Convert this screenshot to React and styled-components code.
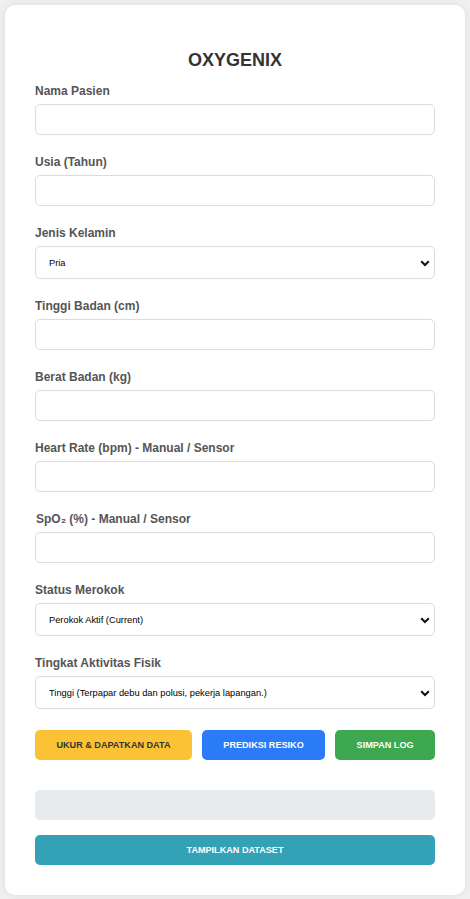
import React from "react";
import styled, { createGlobalStyle } from "styled-components";

const Global = createGlobalStyle`
  html, body { margin: 0; padding: 0; }
  body {
    background: #f0f0f0;
    font-family: "Liberation Sans", Arial, sans-serif;
    padding: 5px;
  }
  * { box-sizing: border-box; }
`;

const Card = styled.div`
  background: #fff;
  border-radius: 10px;
  box-shadow: 0 0 8px rgba(0, 0, 0, 0.08);
  padding: 30px 30px 30px;
  display: flex;
  flex-direction: column;
`;

const Title = styled.h2`
  margin: 15px 0 14px;
  font-size: 18px;
  line-height: 20px;
  font-weight: 700;
  color: #333;
  text-align: center;
`;

const Group = styled.div`
  display: flex;
  flex-direction: column;
  margin-bottom: 20px;
`;

const Label = styled.label`
  font-size: 12px;
  line-height: 15px;
  font-weight: 700;
  color: #555;
  margin-bottom: 5px;
  padding-left: ${(p) => (p.$indent ? "1px" : "0")};
`;

const Input = styled.input`
  height: 31px;
  border: 1px solid #dcdcdc;
  border-radius: 5px;
  padding: 0 13px;
  font-family: inherit;
  font-size: 9.3px;
  background: #fff;
  outline: none;
`;

const SelectWrap = styled.div`
  position: relative;
  display: flex;
`;

const Select = styled.select`
  flex: 1;
  height: 33px;
  appearance: none;
  -webkit-appearance: none;
  border: 1px solid #dcdcdc;
  border-radius: 5px;
  padding: 0 28px 0 13px;
  font-family: inherit;
  font-size: 9.3px;
  color: #000;
  background: #fff;
  outline: none;
`;

const Chevron = styled.svg`
  position: absolute;
  right: 5px;
  top: 50%;
  width: 10px;
  height: 7px;
  margin-top: -3px;
  pointer-events: none;
`;

const ButtonRow = styled.div`
  display: flex;
  gap: 10px;
  margin-top: 1px;
`;

const Button = styled.button`
  flex: 1 1 auto;
  height: 30px;
  padding: 0 10px;
  border: none;
  border-radius: 5px;
  background: ${(p) => p.$bg};
  color: ${(p) => p.$fg || "#fff"};
  font-family: inherit;
  font-size: 9.1px;
  font-weight: 700;
  text-transform: uppercase;
  white-space: nowrap;
  cursor: pointer;
`;

const ResultBox = styled.div`
  margin-top: 30px;
  height: 30px;
  background: #e8ebee;
  border-radius: 5px;
`;

const WideButton = styled(Button)`
  margin-top: 15px;
  width: 100%;
  flex: none;
`;

function Field({ label, indent }) {
  return (
    <Group>
      <Label $indent={indent}>{label}</Label>
      <Input type="text" />
    </Group>
  );
}

function SelectField({ label, options }) {
  return (
    <Group>
      <Label>{label}</Label>
      <SelectWrap>
        <Select defaultValue={options[0]}>
          {options.map((o) => (
            <option key={o}>{o}</option>
          ))}
        </Select>
        <Chevron viewBox="0 0 10 7">
          <path d="M1.2 1.2 L5 5 L8.8 1.2" fill="none" stroke="#111" strokeWidth="2" />
        </Chevron>
      </SelectWrap>
    </Group>
  );
}

export default function App() {
  return (
    <>
      <Global />
      <Card>
        <Title>OXYGENIX</Title>
        <Field label="Nama Pasien" />
        <Field label="Usia (Tahun)" />
        <SelectField label="Jenis Kelamin" options={["Pria", "Wanita"]} />
        <Field label="Tinggi Badan (cm)" />
        <Field label="Berat Badan (kg)" />
        <Field label="Heart Rate (bpm) - Manual / Sensor" />
        <Field label="SpO₂ (%) - Manual / Sensor" indent />
        <SelectField
          label="Status Merokok"
          options={["Perokok Aktif (Current)", "Mantan Perokok", "Tidak Merokok"]}
        />
        <SelectField
          label="Tingkat Aktivitas Fisik"
          options={[
            "Tinggi (Terpapar debu dan polusi, pekerja lapangan.)",
            "Sedang",
            "Rendah",
          ]}
        />
        <ButtonRow>
          <Button $bg="#fcc236" $fg="#333">UKUR &amp; DAPATKAN DATA</Button>
          <Button $bg="#2b7bf8">PREDIKSI RESIKO</Button>
          <Button $bg="#3ca950">SIMPAN LOG</Button>
        </ButtonRow>
        <ResultBox />
        <WideButton $bg="#33a1b6">TAMPILKAN DATASET</WideButton>
      </Card>
    </>
  );
}
